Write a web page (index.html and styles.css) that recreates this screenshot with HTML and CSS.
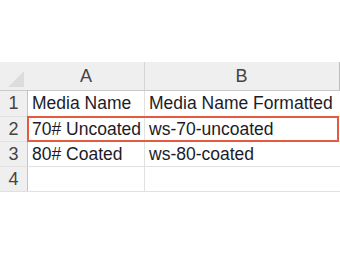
FILE: index.html
```html
<!DOCTYPE html>
<html>
<head>
    <meta charset="UTF-8">
    <title>Media Names</title>
    <link rel="stylesheet" href="styles.css">
</head>
<body>
    <div class="sheet">
        <!-- column headers -->
        <div class="row head">
            <div class="rh corner"><span class="tri"></span></div>
            <div class="cells">
                <div class="cell colA">A</div>
                <div class="cell colB">B</div>
            </div>
        </div>
        <div class="row first">
            <div class="rh">1</div>
            <div class="cells">
                <div class="cell colA">Media Name</div>
                <div class="cell colB">Media Name Formatted</div>
            </div>
        </div>
        <div class="row">
            <div class="rh">2</div>
            <div class="cells picked">
                <div class="cell colA">70# Uncoated</div>
                <div class="cell colB">ws-70-uncoated</div>
            </div>
        </div>
        <div class="row">
            <div class="rh">3</div>
            <div class="cells">
                <div class="cell colA">80# Coated</div>
                <div class="cell colB">ws-80-coated</div>
            </div>
        </div>
        <div class="row">
            <div class="rh">4</div>
            <div class="cells">
                <div class="cell colA"></div>
                <div class="cell colB"></div>
            </div>
        </div>
    </div>
</body>
</html>
```

FILE: styles.css
```css
/* spreadsheet snippet */
body {
    margin: 0;
    background-color: #ffffff;
    font-family: "Liberation Sans", Arial, sans-serif;
}

.sheet {
    padding-top: 62px;
    width: 340px;
}

.row {
    display: flex;
    height: 25px;
    border-bottom: 1px solid #e1e1e1;
    box-sizing: border-box;
}

.row.first {
    height: 26px;
}

.row.head {
    height: 29px;
    background-color: #efefef;
    border-bottom: 1px solid #c9c9c9;
    border-right: 1px solid #bcbcbc;
}

.rh {
    width: 28px;
    flex: none;
    box-sizing: border-box;
    border-right: 1px solid #c4c4c4;
    background-color: #efefef;
    color: #444444;
    font-size: 18px;
    text-align: center;
    line-height: 25px;
}

.corner {
    position: relative;
    border-right: none;
}

.tri {
    position: absolute;
    right: 4px;
    bottom: 3px;
    width: 0;
    height: 0;
    border-left: 16px solid transparent;
    border-bottom: 16px solid #dcdcdc;
}

.cells {
    display: flex;
    flex: none;
    width: 310px;
    box-sizing: border-box;
}

.cell {
    box-sizing: border-box;
    border-right: 1px solid #e1e1e1;
    padding-left: 4px;
    color: #1c1c28;
    font-size: 17.5px;
    line-height: 25px;
    white-space: nowrap;
    overflow: hidden;
}

.colA {
    width: 117px;
}

.colB {
    width: 193px;
    border-right: none;
}

.head .cell {
    color: #444444;
    text-align: center;
    padding-left: 0;
    line-height: 28px;
    font-size: 18px;
    border-right-color: #d4d4d4;
}

.picked {
    outline: 2px solid #e65a3f;
    outline-offset: -1px;
}
```
